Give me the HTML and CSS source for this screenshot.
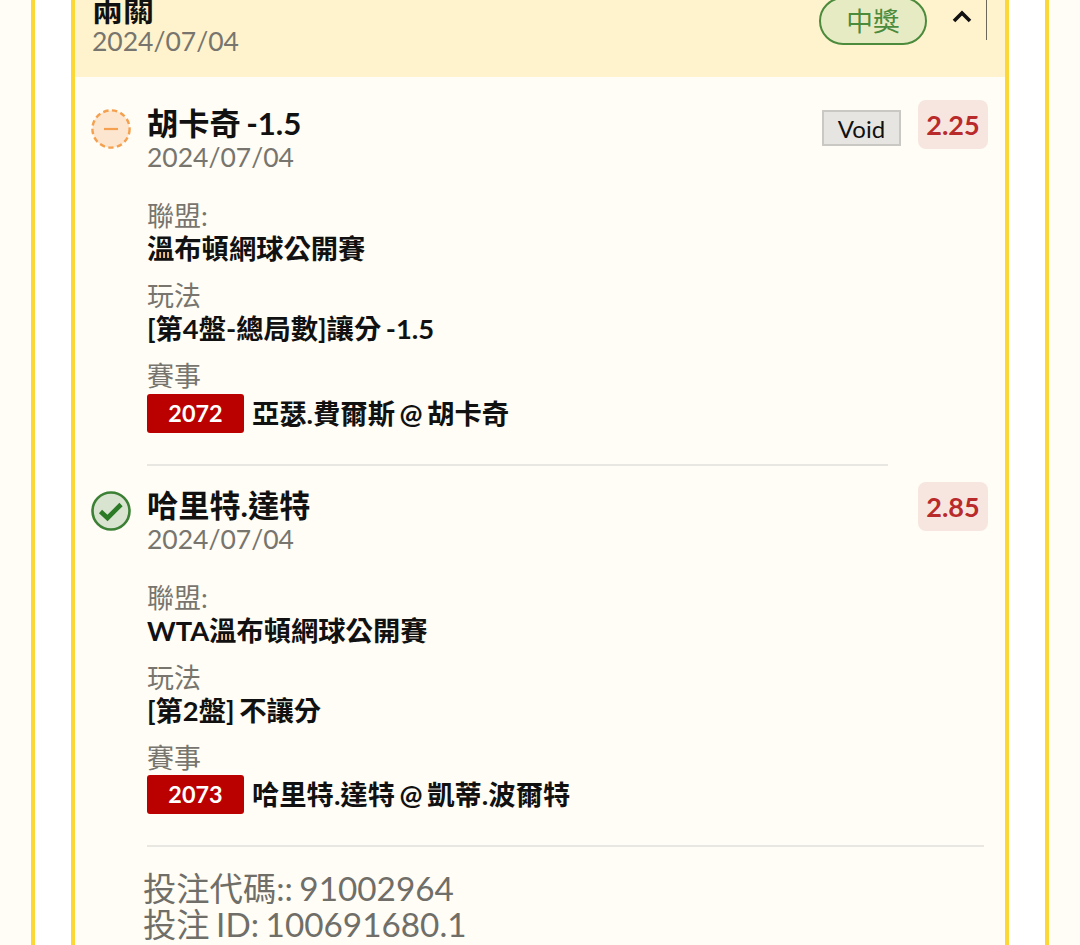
FILE: index.html
```html
<!DOCTYPE html>
<html>
<head>
    <title>Bet</title>
    <link rel="stylesheet" href="styles.css">
</head>
<body>
    <div class="outer">
        <div class="card">
            <div class="cardHead">
                <div>
                    <div class="headTitle">兩關</div>
                    <div class="date">2024/07/04</div>
                </div>
                <div class="headRight">
                    <span class="wonPill">中獎</span>
                    <svg class="chevron" width="20" height="14" viewBox="0 0 20 14"><path d="M2 12 L10 4 L18 12" fill="none" stroke="#111" stroke-width="3.6"/></svg>
                    <span class="headLine"></span>
                </div>
            </div>

            <div class="leg">
                <div class="statusCol">
                    <svg width="40" height="40" viewBox="0 0 40 40"><circle cx="20" cy="20" r="18.6" fill="#fde6cf" stroke="#f4a04f" stroke-width="2.4" stroke-dasharray="5.4 3.4"/><path d="M13 20 H27" stroke="#f4a04f" stroke-width="2.2"/></svg>
                </div>
                <div class="legBody">
                    <div class="legTop">
                        <div>
                            <div class="legTitle">胡卡奇 -1.5</div>
                            <div class="date">2024/07/04</div>
                        </div>
                        <div class="legRight">
                            <span class="voidTag">Void</span>
                            <span class="odds">2.25</span>
                        </div>
                    </div>
                    <div class="label first">聯盟:</div>
                    <div class="value">溫布頓網球公開賽</div>
                    <div class="label">玩法</div>
                    <div class="value">[第4盤-總局數]讓分 -1.5</div>
                    <div class="label">賽事</div>
                    <div class="matchRow"><span class="matchNo">2072</span><span class="value">亞瑟.費爾斯 @ 胡卡奇</span></div>
                    <div class="legLine short"></div>
                </div>
            </div>

            <div class="leg second">
                <div class="statusCol">
                    <svg width="40" height="40" viewBox="0 0 40 40"><circle cx="20" cy="20" r="18.5" fill="#d8e3d0" stroke="#3b8035" stroke-width="2.6"/><path d="M9.5 20.5 L16.5 27 L30 13.5" fill="none" stroke="#2b7a26" stroke-width="4.6"/></svg>
                </div>
                <div class="legBody">
                    <div class="legTop">
                        <div>
                            <div class="legTitle">哈里特.達特</div>
                            <div class="date">2024/07/04</div>
                        </div>
                        <div class="legRight">
                            <span class="odds">2.85</span>
                        </div>
                    </div>
                    <div class="label first">聯盟:</div>
                    <div class="value">WTA溫布頓網球公開賽</div>
                    <div class="label">玩法</div>
                    <div class="value">[第2盤] 不讓分</div>
                    <div class="label">賽事</div>
                    <div class="matchRow tight"><span class="matchNo">2073</span><span class="value">哈里特.達特 @ 凱蒂.波爾特</span></div>
                    <div class="legLine"></div>
                </div>
            </div>

            <div class="betInfo">
                <div>投注代碼:: 91002964</div>
                <div>投注 ID: 100691680.1</div>
            </div>
        </div>
    </div>
</body>
</html>
```

FILE: styles.css
```css
html, body {
    margin: 0;
    height: 945px;
    overflow: hidden;
}

body {
    background-color: #fffdf5;
    font-family: "Lato", "Noto Sans CJK TC", sans-serif;
    word-spacing: -2px;
}

.outer {
    width: 1018px;
    height: 1100px;
    margin-left: 31px;
    margin-top: -10px;
    box-sizing: border-box;
    background-color: #ffffff;
    border-left: 4px solid #fbd835;
    border-right: 4px solid #fbd835;
    padding: 0 36px;
}

.card {
    height: 100%;
    background-color: #fffdf5;
    border-left: 4px solid #fbd835;
    border-right: 4px solid #fbd835;
}

.cardHead {
    display: flex;
    justify-content: space-between;
    height: 87px;
    padding-left: 17px;
    background-color: #fef3cd;
}

.headTitle {
    font-size: 31px;
    font-weight: 700;
    line-height: 32px;
    color: #111;
    margin-top: 3px;
}

.date {
    font-size: 26.5px;
    line-height: 32px;
    color: #77756e;
}

.headRight {
    display: flex;
    align-items: flex-start;
    height: 50px;
    margin-right: 18px;
}

.wonPill {
    box-sizing: border-box;
    width: 108px;
    height: 48px;
    margin-top: 7px;
    border: 2px solid #4c8a3c;
    border-radius: 24px;
    background-color: #e6ebc4;
    color: #4c8a3c;
    font-size: 26.67px;
    line-height: 44px;
    text-align: center;
}

.chevron {
    margin: 19px 14px 0 25px;
}

.headLine {
    width: 1px;
    height: 50px;
    background-color: #6b675c;
}

.leg {
    display: flex;
    padding: 23px 17px 0 16px;
}

.leg.second {
    padding-top: 16px;
}

.statusCol {
    width: 56px;
    flex-shrink: 0;
    padding-top: 9px;
}

.legBody {
    flex: 1;
}

.legTop {
    display: flex;
    justify-content: space-between;
    align-items: flex-start;
    min-height: 74px;
}

.legTitle {
    font-size: 31.2px;
    font-weight: 700;
    line-height: 47px;
    color: #111;
}

.legTop .date {
    margin-top: -6px;
}

.legRight {
    display: flex;
    align-items: flex-start;
}

.voidTag {
    box-sizing: border-box;
    width: 79px;
    height: 36px;
    margin: 10px 17px 0 0;
    border: 2px solid #c9c8c3;
    background-color: #e6e5e1;
    color: #111;
    font-size: 24px;
    line-height: 33px;
    text-align: center;
}

.odds {
    width: 70px;
    height: 49px;
    border-radius: 8px;
    background-color: #f7e6e0;
    color: #b92a2a;
    font-size: 27px;
    font-weight: 700;
    line-height: 49px;
    text-align: center;
}

.label {
    font-size: 27px;
    line-height: 32px;
    color: #77756e;
    margin-top: 14px;
}

.label.first {
    margin-top: 26px;
}

.value {
    font-size: 27.3px;
    font-weight: 700;
    line-height: 34px;
    color: #111;
}

.matchRow {
    display: flex;
    align-items: center;
    gap: 8px;
    margin-top: 2px;
}

.matchRow.tight {
    margin-top: 1px;
}

.matchNo {
    width: 97px;
    height: 39px;
    border-radius: 3px;
    background-color: #bb0000;
    color: #fff;
    font-size: 23.4px;
    font-weight: 700;
    line-height: 39px;
    text-align: center;
}

.legLine {
    width: 837px;
    height: 2px;
    margin-top: 31px;
    background-color: #e8e7e2;
}

.legLine.short {
    width: 741px;
}

.betInfo {
    padding: 23px 0 0 68px;
    font-size: 33.3px;
    line-height: 36px;
    color: #6f6e68;
}
```
